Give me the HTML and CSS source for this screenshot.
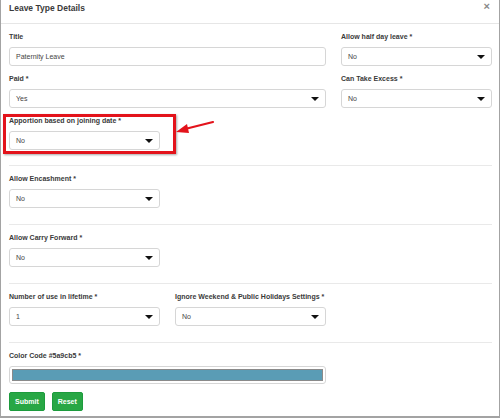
FILE: index.html
```html
<!DOCTYPE html>
<html lang="en">
<head>
    <meta charset="UTF-8">
    <meta name="viewport" content="width=device-width, initial-scale=1.0">
    <title>Leave Type Details</title>
    <link rel="stylesheet" href="styles.css">
</head>
<body>
    <div class="modal">
        <div class="modal-header">
            <h4>Leave Type Details</h4>
            <span class="close">&times;</span>
        </div>

        <form class="modal-body">
            <div class="section">
                <div class="grid">
                    <div class="group span-2">
                        <label>Title</label>
                        <div class="field">Paternity Leave</div>
                    </div>
                    <div class="group">
                        <label>Allow half day leave *</label>
                        <div class="field select">No</div>
                    </div>
                    <div class="group span-2">
                        <label>Paid *</label>
                        <div class="field select">Yes</div>
                    </div>
                    <div class="group">
                        <label>Can Take Excess *</label>
                        <div class="field select">No</div>
                    </div>
                    <div class="group marked">
                        <label>Apportion based on joining date *</label>
                        <div class="field select">No</div>
                        <!-- annotation -->
                        <div class="mark-box"></div>
                        <svg class="mark-arrow" width="40" height="16" viewBox="0 0 40 16">
                            <line x1="10" y1="9" x2="38" y2="2" stroke="#e3131b" stroke-width="2.2" stroke-linecap="round"/>
                            <polygon points="1,12 12,4 14,13" fill="#e3131b"/>
                        </svg>
                    </div>
                </div>
            </div>

            <div class="section">
                <div class="grid">
                    <div class="group">
                        <label>Allow Encashment *</label>
                        <div class="field select">No</div>
                    </div>
                </div>
            </div>

            <div class="section">
                <div class="grid">
                    <div class="group">
                        <label>Allow Carry Forward *</label>
                        <div class="field select">No</div>
                    </div>
                </div>
            </div>

            <div class="section">
                <div class="grid">
                    <div class="group">
                        <label>Number of use in lifetime *</label>
                        <div class="field select">1</div>
                    </div>
                    <div class="group">
                        <label>Ignore Weekend &amp; Public Holidays Settings *</label>
                        <div class="field select">No</div>
                    </div>
                </div>
            </div>

            <div class="section last">
                <div class="grid">
                    <div class="group span-2">
                        <label>Color Code #5a9cb5 *</label>
                        <div class="field color"><span class="swatch"></span></div>
                    </div>
                </div>
                <div class="actions">
                    <button type="button" class="btn">Submit</button>
                    <button type="button" class="btn">Reset</button>
                </div>
            </div>
        </form>
    </div>
</body>
</html>
```

FILE: styles.css
```css
body {
    margin: 0;
    background-color: #fff;
    font-family: "Liberation Sans", Arial, sans-serif;
    color: #333;
}
.modal {
    width: 500px;
    height: 418px;
    box-sizing: border-box;
    border: 1px solid #a3a3a3;
    border-top: none;
    border-bottom-width: 2px;
    background-color: #fff;
    overflow: hidden;
}
.modal-header {
    height: 23px;
    display: flex;
    justify-content: space-between;
    align-items: flex-start;
    padding: 0 8px;
    border-bottom: 1px solid #e6e6e6;
}
.modal-header h4 {
    margin: 0;
    font-size: 8.5px;
    line-height: 16px;
    font-weight: bold;
    color: #3a3a3a;
}
.close {
    font-size: 11px;
    line-height: 13px;
    font-weight: bold;
    color: #888;
    margin-right: 1px;
}
.modal-body {
    padding: 0 7px 0 8px;
}
.section {
    padding: 7px 0 16px;
    border-top: 1px solid #e9e9e9;
}
.section:first-child {
    border-top: none;
    padding-bottom: 15px;
}
.section.last {
    padding-bottom: 0;
}
.grid {
    display: grid;
    grid-template-columns: repeat(3, 1fr);
    column-gap: 15px;
    row-gap: 7px;
}
.span-2 {
    grid-column: span 2;
}
.group {
    display: flex;
    flex-direction: column;
}
.group label {
    font-size: 7px;
    line-height: 12px;
    font-weight: bold;
    color: #3a3a3a;
    margin-bottom: 4px;
    white-space: nowrap;
}
.field {
    height: 19px;
    box-sizing: border-box;
    border: 1px solid #d6d6d6;
    border-radius: 3px;
    display: flex;
    align-items: center;
    justify-content: space-between;
    padding: 0 6px 0 6px;
    font-size: 7px;
    color: #444;
    background-color: #fff;
}
.select::after {
    content: "";
    border-left: 4px solid transparent;
    border-right: 4px solid transparent;
    border-top: 4px solid #111;
}
.color {
    height: 18px;
    padding: 2px;
}
.swatch {
    flex: 1;
    height: 100%;
    box-sizing: border-box;
    background-color: #5a9cb5;
    border: 1px solid #8a8a8a;
}
.actions {
    display: flex;
    gap: 7px;
    margin-top: 8px;
}
.btn {
    height: 19px;
    padding: 0 5px;
    border: 1px solid #1d9b3d;
    border-radius: 2px;
    background-color: #28a745;
    color: #fff;
    font-family: inherit;
    font-size: 7px;
    font-weight: bold;
}

/* red annotation around the apportion field */
.marked {
    position: relative;
}
.mark-box {
    position: absolute;
    left: -6px;
    top: -1px;
    width: 173px;
    height: 40px;
    box-sizing: border-box;
    border: 3px solid #e3131b;
    box-shadow: 1px 1px 2px rgba(0, 0, 0, 0.35);
}
.mark-arrow {
    position: absolute;
    left: 166px;
    top: 5px;
}
```
